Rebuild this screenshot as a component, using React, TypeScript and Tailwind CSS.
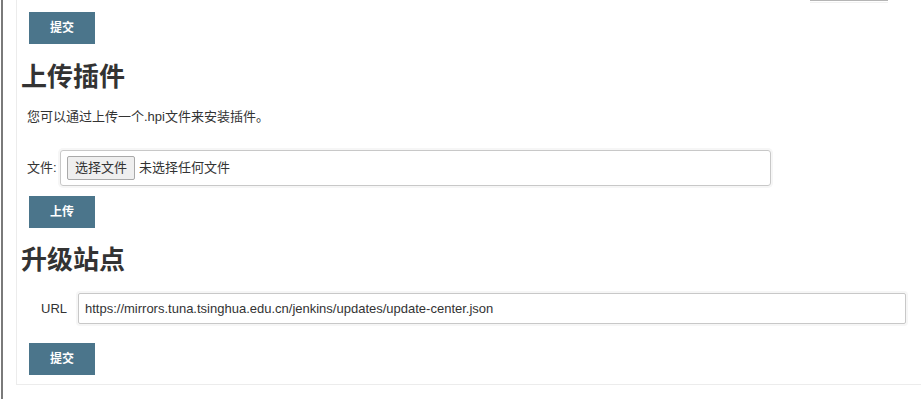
import React from 'react';

const font = { fontFamily: '"Liberation Sans", "Noto Sans CJK SC", sans-serif' };

const SubmitButton: React.FC<{ label: string; className?: string }> = ({ label, className }) => (
  <button
    className={`ml-[12px] w-[66px] h-[32px] bg-[#4b758b] text-white text-[12px] font-bold flex items-center justify-center ${className ?? ''}`}
  >
    {label}
  </button>
);

const App: React.FC = () => {
  return (
    <div className="w-[921px] h-[399px] bg-white flex overflow-hidden text-[#333]" style={font}>
      <div className="ml-[1px] w-[2px] h-full bg-[#7a7a7a]" />
      <div className="ml-[13px] flex-1 self-start border-l border-b border-[#ececec] flex flex-col pb-[9px]">
        <div className="flex justify-end">
          <div className="mr-[33px] w-[78px] h-[3px] border-t border-[#b5b5b5] border-b border-b-[#f2f2f2]" />
        </div>

        <SubmitButton label="提交" className="mt-[9px]" />

        <h2 className="mt-[18px] ml-[4px] text-[26px] leading-[30px] font-bold">上传插件</h2>
        <p className="mt-[16px] ml-[10px] text-[13px] leading-[18px]">您可以通过上传一个.hpi文件来安装插件。</p>

        <div className="mt-[24px] ml-[10px] flex items-center">
          <span className="text-[13px] w-[33px]">文件:</span>
          <div className="w-[711px] h-[36px] border border-[#c8c8c8] rounded-[3px] shadow-[0_0_0_2px_#f6f6f6] flex items-center pl-[6px]">
            <span className="h-[24px] px-[7px] border border-[#a9a9a9] rounded-[2px] bg-[#efefef] text-[13px] flex items-center">选择文件</span>
            <span className="ml-[4px] text-[13px]">未选择任何文件</span>
          </div>
        </div>

        <SubmitButton label="上传" className="mt-[10px]" />

        <h2 className="mt-[17px] ml-[4px] text-[26px] leading-[30px] font-bold">升级站点</h2>

        <div className="mt-[18px] flex items-center">
          <span className="ml-[24px] w-[37px] text-[13px]">URL</span>
          <div className="w-[828px] h-[31px] border border-[#c8c8c8] rounded-[2px] shadow-[0_0_0_2px_#f6f6f6] flex items-center px-[6px] text-[13px]">
            https://mirrors.tuna.tsinghua.edu.cn/jenkins/updates/update-center.json
          </div>
        </div>

        <SubmitButton label="提交" className="mt-[19px]" />
      </div>
    </div>
  );
};

export default App;
